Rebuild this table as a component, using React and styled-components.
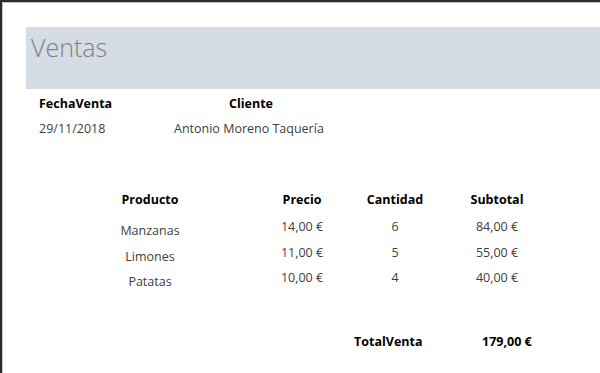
import { styled, createGlobalStyle } from 'styled-components';

const GlobalStyle = createGlobalStyle`
  html, body {
    margin: 0;
    padding: 0;
    background: #ffffff;
    font-family: 'Open Sans', 'Liberation Sans', sans-serif;
  }
`;

const lines = [
  { producto: 'Manzanas', precio: '14,00 €', cantidad: '6', subtotal: '84,00 €' },
  { producto: 'Limones', precio: '11,00 €', cantidad: '5', subtotal: '55,00 €' },
  { producto: 'Patatas', precio: '10,00 €', cantidad: '4', subtotal: '40,00 €' },
];

export default function App() {
  return (
    <>
      <GlobalStyle />
      <ReportFrame>
        <TitleBand>
          <Title>Ventas</Title>
        </TitleBand>
        <InfoGrid>
          <Label>FechaVenta</Label>
          <Label $center>Cliente</Label>
          <Value>29/11/2018</Value>
          <Value>Antonio Moreno Taquería</Value>
        </InfoGrid>
        <DetailTable>
          <HeadCell>Producto</HeadCell>
          <HeadCell>Precio</HeadCell>
          <HeadCell>Cantidad</HeadCell>
          <HeadCell>Subtotal</HeadCell>
          {lines.map((l) => (
            <>
              <Cell $low>{l.producto}</Cell>
              <Cell>{l.precio}</Cell>
              <Cell>{l.cantidad}</Cell>
              <Cell>{l.subtotal}</Cell>
            </>
          ))}
        </DetailTable>
        <TotalRow>
          <TotalLabel>TotalVenta</TotalLabel>
          <TotalValue>179,00 €</TotalValue>
        </TotalRow>
      </ReportFrame>
    </>
  );
}

const ReportFrame = styled.div`
  box-sizing: border-box;
  width: 600px;
  height: 373px;
  overflow: hidden;
  border-top: 2px solid #2b2b2b;
  border-left: 2px solid #2b2b2b;
  box-shadow: inset 1px 1px 0 #c4c4c4;
  padding: 25px 0 0 24px;
  display: flex;
  flex-direction: column;
`;

const TitleBand = styled.div`
  height: 62px;
  background: #d6dce5;
  padding: 5px 0 0 5px;
  box-sizing: border-box;
`;

const Title = styled.div`
  font-size: 25px;
  font-weight: 300;
  color: #808080;
  line-height: 30px;
`;

const InfoGrid = styled.div`
  display: grid;
  grid-template-columns: 135px 154px;
  grid-auto-rows: 25px;
  padding: 2px 0 0 13px;
`;

const Label = styled.div`
  font-size: 12.5px;
  font-weight: 700;
  color: #000000;
  line-height: 25px;
  text-align: ${(p) => (p.$center ? 'center' : 'left')};
`;

const Value = styled.div`
  font-size: 12.5px;
  color: #404040;
  line-height: 25px;
  white-space: nowrap;
`;

const DetailTable = styled.div`
  display: grid;
  grid-template-columns: 200px 104px 82px 122px;
  grid-template-rows: 27px repeat(3, 25.5px);
  margin: 48px 0 0 24px;
`;

const HeadCell = styled.div`
  font-size: 12.5px;
  font-weight: 700;
  color: #000000;
  text-align: center;
  line-height: 22px;
`;

const Cell = styled.div`
  font-size: 12.5px;
  color: #404040;
  text-align: center;
  line-height: 22px;
  padding-top: ${(p) => (p.$low ? '4px' : '0')};
`;

const TotalRow = styled.div`
  display: flex;
  align-items: center;
  margin: 40px 0 0 328px;
`;

const TotalLabel = styled.div`
  width: 128px;
  font-size: 12.5px;
  font-weight: 700;
  color: #000000;
`;

const TotalValue = styled.div`
  font-size: 12.5px;
  font-weight: 700;
  color: #000000;
`;
